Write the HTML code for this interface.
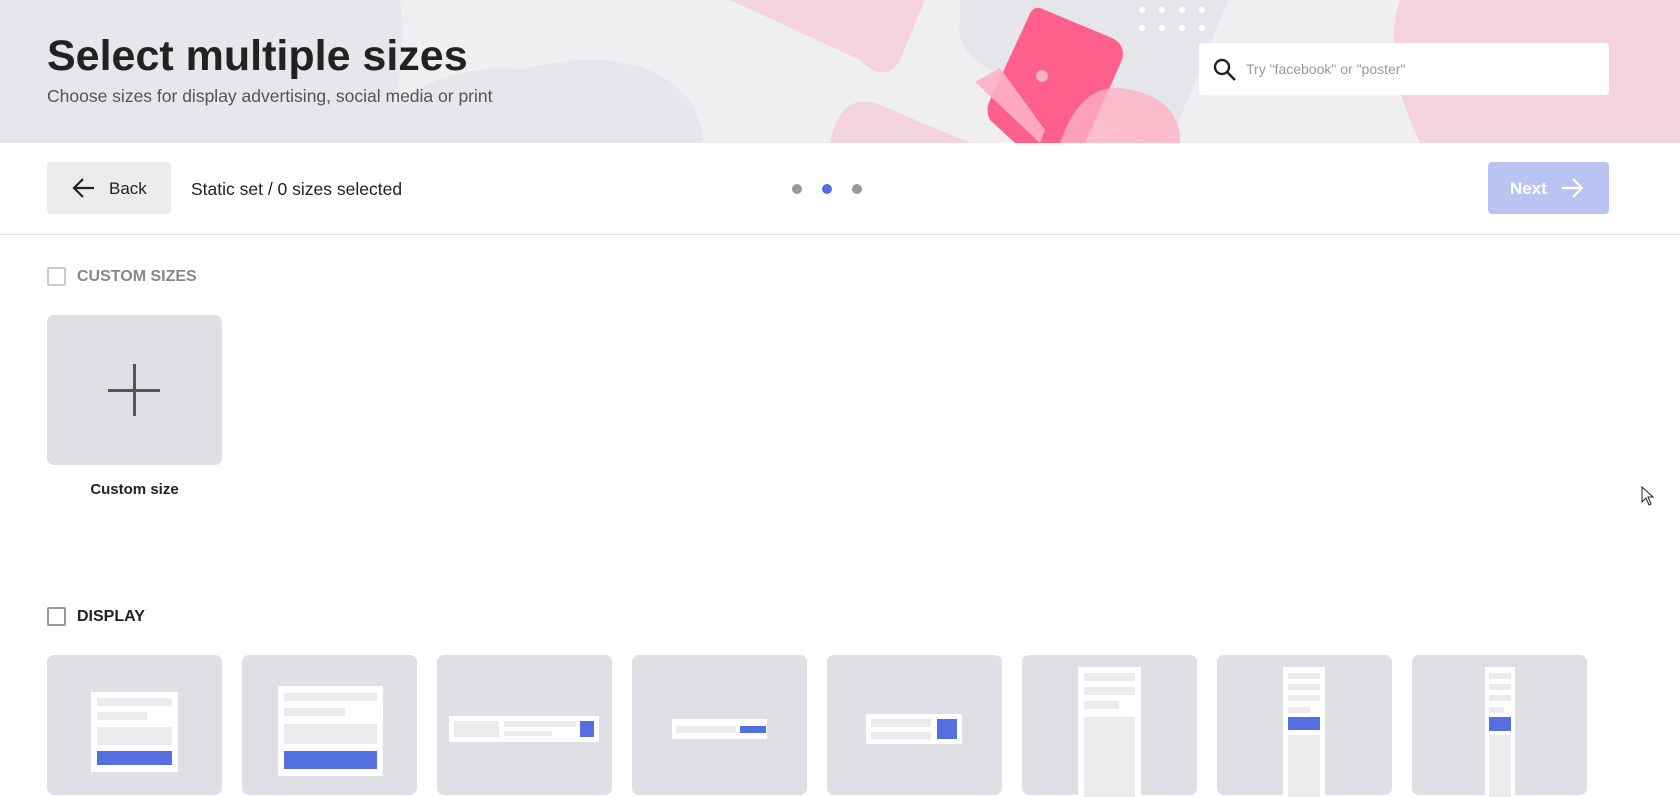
<!DOCTYPE html>
<html><head><meta charset="utf-8"><style>
*{margin:0;padding:0;box-sizing:border-box}
body{width:1680px;height:764px;overflow:hidden;background:#fff;font-family:"Liberation Sans",Arial,sans-serif;position:relative;color:#222}
.abs{position:absolute}
.tile{position:absolute;top:655px;width:175px;height:140px;background:#dfe0e5;border-radius:7px}
.w{position:absolute;background:#fff}
.g{position:absolute;background:#ebebee}
.b{position:absolute;background:#5470e0}
</style></head><body>
<svg class="abs" style="left:0;top:0" width="1680" height="143" viewBox="0 0 1680 143">
<rect width="1680" height="143" fill="#efeff2"/>
<path d="M0 0 H400 Q410 70 380 143 H0Z" fill="#e6e6eb"/>
<path d="M360 143 Q420 60 520 70 Q640 40 690 100 Q705 130 702 143Z" fill="#e6e6eb"/>
<path d="M730 0 H925 L900 60 Q885 85 860 60 Z" fill="#f2d3de"/>
<path d="M960 0 H1228 L1175 130 Q1160 150 1130 135 L990 70 Q955 50 960 20Z" fill="#e5e5ea"/>
<path d="M830 143 Q840 90 880 105 L970 143Z" fill="#f2d3de"/>
<path d="M1400 0 H1680 V143 H1420 Q1380 60 1400 0Z" fill="#f2d3de"/>
<path d="M1040 8 L1112 38 Q1126 45 1122 60 L1085 143 H1015 L990 120 Q985 110 990 100 L1028 18 Q1032 6 1040 8Z" fill="#ff5f8b"/>
<path d="M975 82 L1000 68 L1045 130 L1040 143 Z" fill="#ffb0c5" opacity=".9"/>
<path d="M1060 143 Q1080 85 1120 88 Q1175 95 1180 135 L1180 143Z" fill="#ffb0c5" opacity=".8"/>
<circle cx="1042" cy="76" r="6" fill="#ffb0c5"/>
<g fill="#fff"><circle cx="1142" cy="10" r="3"/><circle cx="1162" cy="10" r="3"/><circle cx="1182" cy="10" r="3"/><circle cx="1202" cy="10" r="3"/><circle cx="1142" cy="28" r="3"/><circle cx="1162" cy="28" r="3"/><circle cx="1182" cy="28" r="3"/><circle cx="1202" cy="28" r="3"/></g>
</svg>
<div class="abs" style="left:47px;top:32px;font-size:43px;font-weight:bold;color:#222">Select multiple sizes</div>
<div class="abs" style="left:47px;top:86px;font-size:17.5px;color:#555">Choose sizes for display advertising, social media or print</div>
<div class="abs" style="left:1199px;top:43px;width:410px;height:52px;background:#fff;border-radius:4px"></div>
<svg class="abs" style="left:1212px;top:57px" width="26" height="26" viewBox="0 0 26 26"><circle cx="10" cy="10" r="7" fill="none" stroke="#222" stroke-width="2.4"/><path d="M15 15 L23 23" stroke="#222" stroke-width="2.6"/></svg>
<div class="abs" style="left:1246px;top:61px;font-size:14px;color:#999">Try "facebook" or "poster"</div>

<div class="abs" style="left:47px;top:162px;width:124px;height:52px;background:#ececef;border-radius:4px"></div>
<svg class="abs" style="left:72px;top:177px" width="24" height="22" viewBox="0 0 24 22"><path d="M22 11 H3 M11 2 L2 11 L11 20" fill="none" stroke="#222" stroke-width="2.2"/></svg>
<div class="abs" style="left:109px;top:179px;font-size:17px;color:#222">Back</div>
<div class="abs" style="left:191px;top:179px;font-size:17.5px;color:#222">Static set / 0 sizes selected</div>
<div class="abs" style="left:792px;top:184px;width:10px;height:10px;border-radius:50%;background:#999"></div>
<div class="abs" style="left:822px;top:184px;width:10px;height:10px;border-radius:50%;background:#4f6ee6"></div>
<div class="abs" style="left:852px;top:184px;width:10px;height:10px;border-radius:50%;background:#999"></div>
<div class="abs" style="left:1488px;top:162px;width:121px;height:52px;background:#bac4f2;border-radius:4px"></div>
<div class="abs" style="left:1510px;top:179px;font-size:17px;font-weight:bold;color:#fff">Next</div>
<svg class="abs" style="left:1560px;top:177px" width="24" height="22" viewBox="0 0 24 22"><path d="M2 11 H21 M13 2 L22 11 L13 20" fill="none" stroke="#fff" stroke-width="2.2"/></svg>
<div class="abs" style="left:0;top:234px;width:1680px;height:1px;background:#ddd"></div>

<div class="abs" style="left:47px;top:267px;width:19px;height:19px;border:2px solid #ccc;border-radius:2px"></div>
<div class="abs" style="left:77px;top:268px;font-size:16px;font-weight:bold;color:#888">CUSTOM SIZES</div>
<div class="abs" style="left:47px;top:315px;width:175px;height:150px;background:#dfe0e5;border-radius:7px"></div>
<div class="abs" style="left:108px;top:389px;width:52px;height:3px;background:#555"></div>
<div class="abs" style="left:133px;top:364px;width:3px;height:52px;background:#555"></div>
<div class="abs" style="left:47px;top:481px;width:175px;text-align:center;font-size:15px;font-weight:bold;color:#222">Custom size</div>

<div class="abs" style="left:47px;top:607px;width:19px;height:19px;border:2px solid #999;border-radius:2px"></div>
<div class="abs" style="left:77px;top:608px;font-size:16px;font-weight:bold;color:#222">DISPLAY</div>

<div class="tile" style="left:47px"><div class="w" style="left:44px;top:37px;width:87px;height:80px"><div class="g" style="left:6px;top:6px;width:75px;height:8px"></div><div class="g" style="left:6px;top:20px;width:50px;height:8px"></div><div class="g" style="left:6px;top:35px;width:75px;height:18px"></div><div class="b" style="left:6px;top:59px;width:75px;height:14px"></div></div></div>
<div class="tile" style="left:242px"><div class="w" style="left:36px;top:31px;width:105px;height:90px"><div class="g" style="left:6px;top:7px;width:93px;height:8px"></div><div class="g" style="left:6px;top:22px;width:61px;height:8px"></div><div class="g" style="left:6px;top:38px;width:93px;height:20px"></div><div class="b" style="left:6px;top:65px;width:93px;height:18px"></div></div></div>
<div class="tile" style="left:437px"><div class="w" style="left:12px;top:61px;width:150px;height:26px"><div class="g" style="left:5px;top:5px;width:45px;height:16px"></div><div class="g" style="left:55px;top:5px;width:72px;height:6px"></div><div class="g" style="left:55px;top:15px;width:48px;height:5px"></div><div class="b" style="left:131px;top:5px;width:14px;height:16px"></div></div></div>
<div class="tile" style="left:632px"><div class="w" style="left:40px;top:64px;width:95px;height:20px"><div class="g" style="left:4px;top:7px;width:60px;height:7px"></div><div class="b" style="left:68px;top:7px;width:26px;height:7px"></div></div></div>
<div class="tile" style="left:827px"><div class="w" style="left:39px;top:59px;width:96px;height:30px"><div class="g" style="left:5px;top:5px;width:60px;height:8px"></div><div class="g" style="left:5px;top:18px;width:60px;height:7px"></div><div class="b" style="left:71px;top:5px;width:20px;height:20px"></div></div></div>
<div class="tile" style="left:1022px"><div class="w" style="left:56px;top:12px;width:63px;height:130px"><div class="g" style="left:6px;top:6px;width:51px;height:8px"></div><div class="g" style="left:6px;top:20px;width:51px;height:8px"></div><div class="g" style="left:6px;top:34px;width:35px;height:8px"></div><div class="g" style="left:6px;top:50px;width:51px;height:80px"></div></div></div>
<div class="tile" style="left:1217px"><div class="w" style="left:66px;top:12px;width:42px;height:130px"><div class="g" style="left:5px;top:6px;width:32px;height:6px"></div><div class="g" style="left:5px;top:17px;width:32px;height:6px"></div><div class="g" style="left:5px;top:28px;width:32px;height:6px"></div><div class="g" style="left:5px;top:40px;width:22px;height:6px"></div><div class="b" style="left:5px;top:50px;width:32px;height:13px"></div><div class="g" style="left:5px;top:68px;width:32px;height:62px"></div></div></div>
<div class="tile" style="left:1412px"><div class="w" style="left:73px;top:12px;width:30px;height:130px"><div class="g" style="left:4px;top:6px;width:22px;height:6px"></div><div class="g" style="left:4px;top:17px;width:22px;height:6px"></div><div class="g" style="left:4px;top:28px;width:22px;height:6px"></div><div class="g" style="left:4px;top:40px;width:15px;height:6px"></div><div class="b" style="left:4px;top:50px;width:22px;height:14px"></div><div class="g" style="left:4px;top:68px;width:22px;height:62px"></div></div></div>

<svg class="abs" style="left:1641px;top:486px" width="14" height="20" viewBox="0 0 14 20"><path d="M1 1 V16 L5 12 L8 19 L10 18 L7 11 H12 Z" fill="#fff" stroke="#222" stroke-width="1"/></svg>
</body></html>
